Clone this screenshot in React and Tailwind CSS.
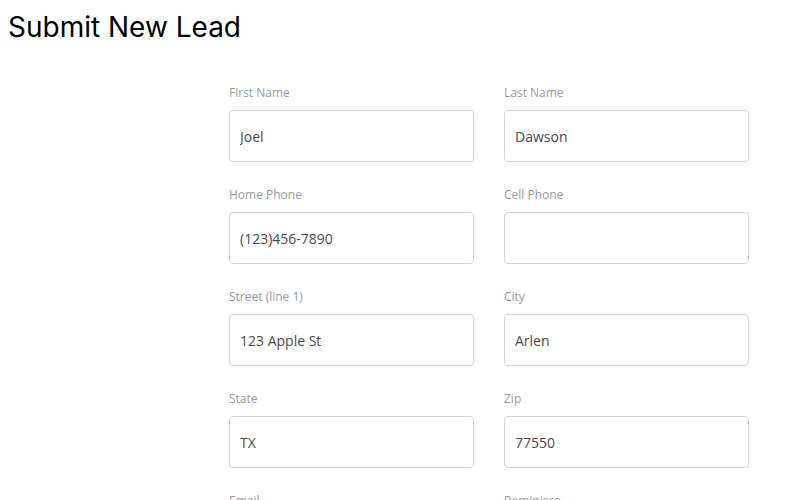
import { useState } from 'react';

const fields = [
  ['First Name', 'Joel', 'Last Name', 'Dawson'],
  ['Home Phone', '(123)456-7890', 'Cell Phone', ''],
  ['Street (line 1)', '123 Apple St', 'City', 'Arlen'],
  ['State', 'TX', 'Zip', '77550'],
  ['Email', '', 'Reminisce', ''],
];

const Field = ({ label, initial }) => {
  const [value, setValue] = useState(initial);
  return (
    <div className="mb-[24px]">
      <label className="block pt-[1px] text-[12px] leading-[16px] text-[#9a9a9a] mb-[9px]">{label}</label>
      <input
        type="text"
        value={value}
        onChange={(e) => setValue(e.target.value)}
        className="block w-full h-[52px] px-[10px] border border-[#d4d4d4] rounded-[4px] text-[14px] text-[#4a4a4a] outline-none"
      />
    </div>
  );
};

const App = () => {
  return (
    <div className="min-h-screen bg-white overflow-hidden" style={{ fontFamily: '"Open Sans", sans-serif' }}>
      <h1 className="px-[8px] pt-[10px] text-[28px] leading-[34px] text-black" style={{ fontFamily: 'Inter, sans-serif' }}>
        Submit New Lead
      </h1>
      <form className="ml-[229px] w-[520px] mt-[40px] grid grid-cols-2 gap-x-[30px]">
        {fields.map(([l1, v1, l2, v2]) => (
          <div key={l1} className="contents">
            <Field label={l1} initial={v1} />
            <Field label={l2} initial={v2} />
          </div>
        ))}
      </form>
    </div>
  );
};

export default App;
